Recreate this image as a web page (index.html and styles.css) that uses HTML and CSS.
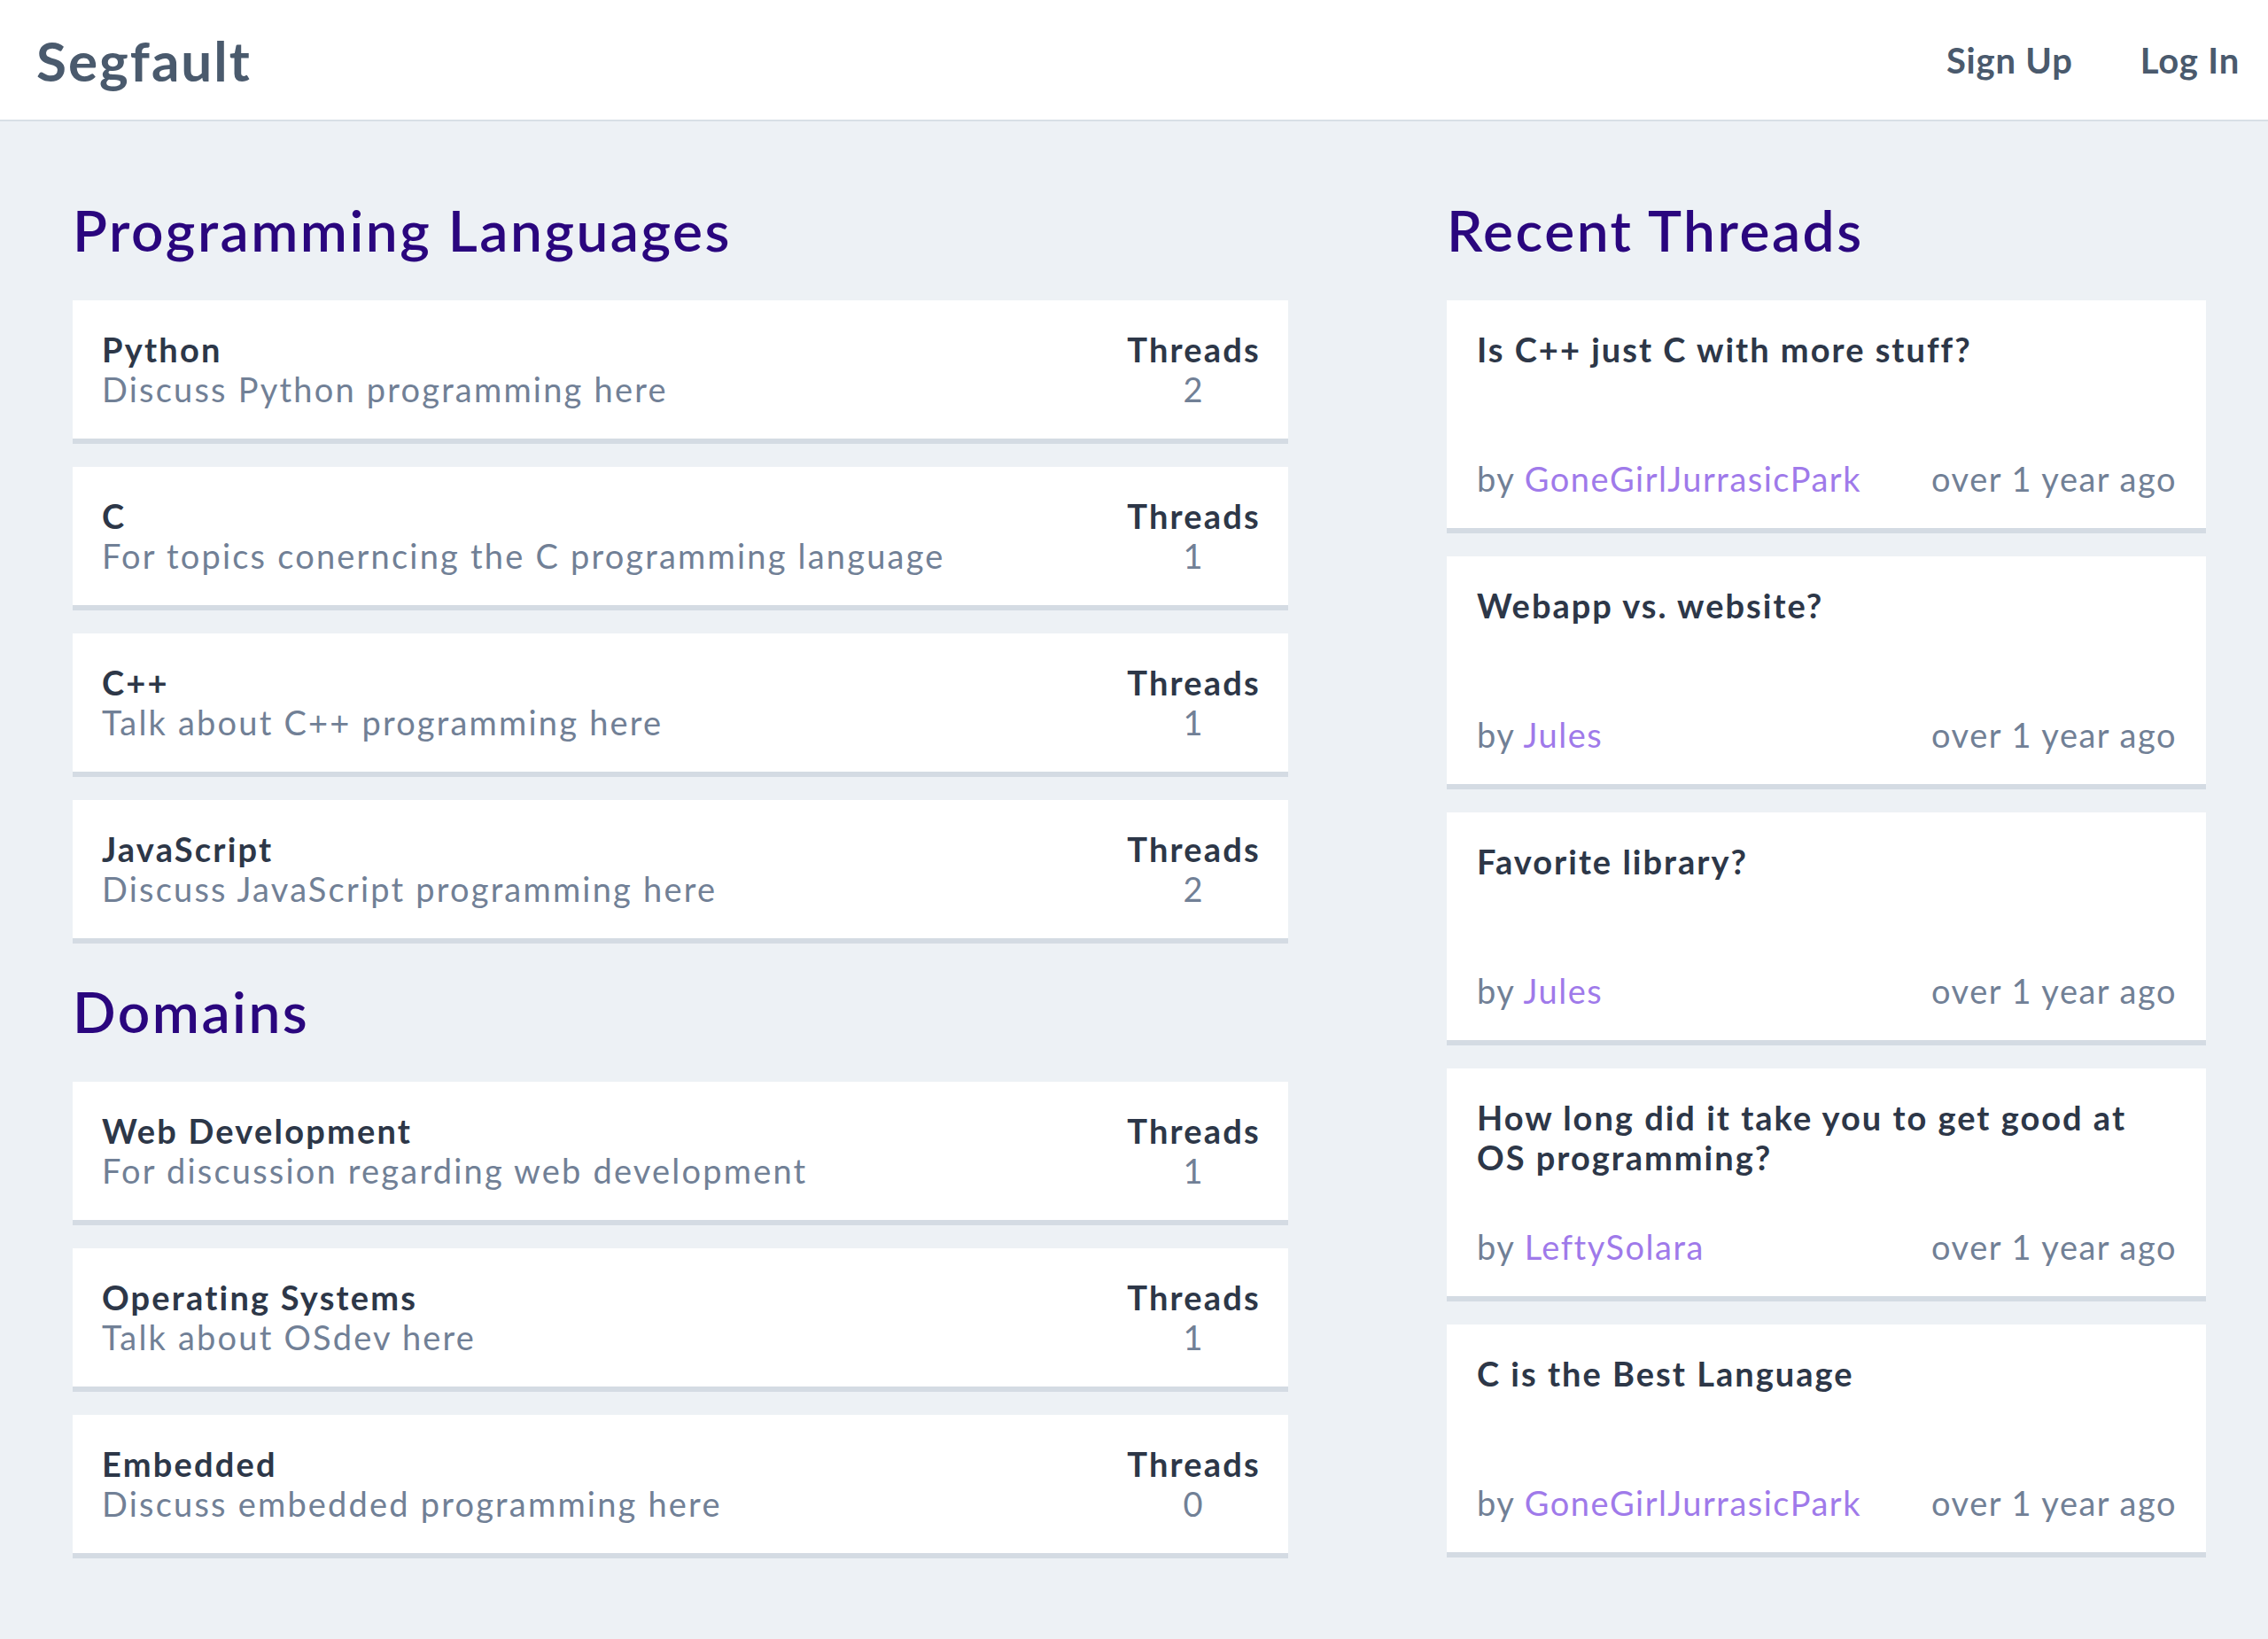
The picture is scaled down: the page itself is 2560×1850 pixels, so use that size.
FILE: index.html
```html
<!DOCTYPE html>
<html lang="en">
<head>
<meta charset="utf-8">
<title>Segfault</title>
<link rel="stylesheet" href="styles.css">
</head>
<body>
<header class="topbar">
  <a class="logo" href="#">Segfault</a>
  <nav class="nav">
    <a href="#">Sign Up</a>
    <a href="#">Log In</a>
  </nav>
</header>
<main class="main">
  <div class="col-left">
    <section class="section">
      <h2 class="section-title">Programming Languages</h2>
      <div class="forum">
        <div class="forum-info"><div class="forum-name">Python</div><div class="forum-desc">Discuss Python programming here</div></div>
        <div class="forum-count"><div class="count-label">Threads</div><div class="count-num">2</div></div>
      </div>
      <div class="forum">
        <div class="forum-info"><div class="forum-name">C</div><div class="forum-desc">For topics conerncing the C programming language</div></div>
        <div class="forum-count"><div class="count-label">Threads</div><div class="count-num">1</div></div>
      </div>
      <div class="forum">
        <div class="forum-info"><div class="forum-name">C++</div><div class="forum-desc">Talk about C++ programming here</div></div>
        <div class="forum-count"><div class="count-label">Threads</div><div class="count-num">1</div></div>
      </div>
      <div class="forum">
        <div class="forum-info"><div class="forum-name">JavaScript</div><div class="forum-desc">Discuss JavaScript programming here</div></div>
        <div class="forum-count"><div class="count-label">Threads</div><div class="count-num">2</div></div>
      </div>
    </section>
    <section class="section">
      <h2 class="section-title">Domains</h2>
      <div class="forum">
        <div class="forum-info"><div class="forum-name">Web Development</div><div class="forum-desc">For discussion regarding web development</div></div>
        <div class="forum-count"><div class="count-label">Threads</div><div class="count-num">1</div></div>
      </div>
      <div class="forum">
        <div class="forum-info"><div class="forum-name">Operating Systems</div><div class="forum-desc">Talk about OSdev here</div></div>
        <div class="forum-count"><div class="count-label">Threads</div><div class="count-num">1</div></div>
      </div>
      <div class="forum">
        <div class="forum-info"><div class="forum-name">Embedded</div><div class="forum-desc">Discuss embedded programming here</div></div>
        <div class="forum-count"><div class="count-label">Threads</div><div class="count-num">0</div></div>
      </div>
    </section>
  </div>
  <div class="col-right">
    <section class="section">
      <h2 class="section-title">Recent Threads</h2>
      <div class="thread">
        <div class="thread-title">Is C++ just C with more stuff?</div>
        <div class="thread-meta"><span>by <a class="user" href="#">GoneGirlJurrasicPark</a></span><span>over 1 year ago</span></div>
      </div>
      <div class="thread">
        <div class="thread-title">Webapp vs. website?</div>
        <div class="thread-meta"><span>by <a class="user" href="#">Jules</a></span><span>over 1 year ago</span></div>
      </div>
      <div class="thread">
        <div class="thread-title">Favorite library?</div>
        <div class="thread-meta"><span>by <a class="user" href="#">Jules</a></span><span>over 1 year ago</span></div>
      </div>
      <div class="thread">
        <div class="thread-title">How long did it take you to get good at OS programming?</div>
        <div class="thread-meta"><span>by <a class="user" href="#">LeftySolara</a></span><span>over 1 year ago</span></div>
      </div>
      <div class="thread">
        <div class="thread-title">C is the Best Language</div>
        <div class="thread-meta"><span>by <a class="user" href="#">GoneGirlJurrasicPark</a></span><span>over 1 year ago</span></div>
      </div>
    </section>
  </div>
</main>
</body>
</html>
```

FILE: styles.css
```css
* { box-sizing: border-box; }
html, body { margin: 0; padding: 0; }
body {
  background: #edf1f5;
  font-family: Lato, "Open Sans", sans-serif;
  color: #2d3748;
  min-height: 1850px;
}
a { text-decoration: none; color: inherit; }

.topbar {
  height: 137px;
  background: #ffffff;
  border-bottom: 2px solid #d8dfe6;
  display: flex;
  align-items: center;
  justify-content: space-between;
  padding: 0 32px 0 41px;
}
.logo {
  font-size: 62px;
  font-weight: 700;
  letter-spacing: 2px;
  color: #4a5a6d;
}
.nav { display: flex; gap: 76px; }
.nav a {
  font-size: 40px;
  font-weight: 700;
  letter-spacing: 0.8px;
  color: #4a5a6d;
}

.main {
  display: grid;
  grid-template-columns: 1372px 857px;
  column-gap: 179px;
  padding: 86px 0 0 82px;
  align-items: start;
}
.section + .section { margin-top: 40px; }
.section-title {
  margin: 0 0 42px;
  font-size: 64px;
  line-height: 74px;
  font-weight: 600;
  letter-spacing: 2.5px;
  color: #2a067e;
}

.forum {
  background: #fff;
  border-bottom: 6px solid #d4dbe3;
  margin-bottom: 26px;
  padding: 33px;
  display: flex;
  justify-content: space-between;
  font-size: 38px;
  line-height: 45px;
  letter-spacing: 2.2px;
}
.forum-name, .count-label { font-weight: 700; color: #2d3748; }
.forum-desc, .count-num { color: #718096; }
.forum-count { text-align: center; margin-right: -2px; }

.thread {
  background: #fff;
  border-bottom: 6px solid #d4dbe3;
  margin-bottom: 26px;
  padding: 33px 34px;
  font-size: 38px;
  line-height: 45px;
}
.thread-title {
  font-weight: 700;
  letter-spacing: 2px;
  color: #2d3748;
  min-height: 90px;
}
.thread-meta {
  margin-top: 56px;
  display: flex;
  justify-content: space-between;
  letter-spacing: 1.5px;
  color: #718096;
}
.thread-meta span:last-child { margin-right: -1px; }
.user { color: #9f7aea; }
```
